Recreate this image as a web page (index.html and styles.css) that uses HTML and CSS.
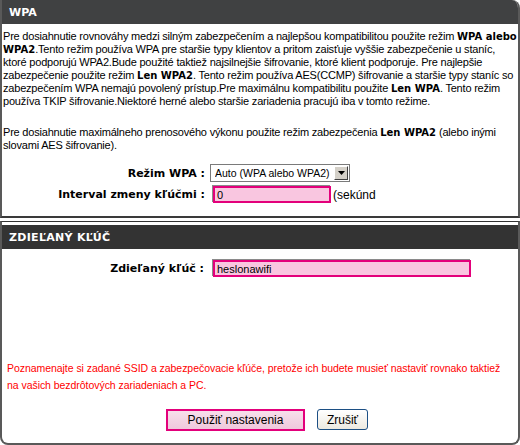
FILE: index.html
```html
<!DOCTYPE html>
<html lang="sk">
<head>
    <meta charset="UTF-8">
    <title>WPA</title>
    <link rel="stylesheet" href="styles.css">
</head>
<body>
    <div class="page">
        <div class="box box-wpa">
            <h2 class="box-title">WPA</h2>
            <div class="box-body">
                <p class="info">Pre dosiahnutie rovnováhy medzi silným zabezpečením a najlepšou kompatibilitou použite režim <b>WPA alebo WPA2</b>.Tento režim používa WPA pre staršie typy klientov a pritom zaisťuje vyššie zabezpečenie u staníc, ktoré podporujú WPA2.Bude použité taktiež najsilnejšie šifrovanie, ktoré klient podporuje. Pre najlepšie zabezpečenie použite režim <b>Len WPA2</b>. Tento režim používa AES(CCMP) šifrovanie a staršie typy staníc so zabezpečením WPA nemajú povolený prístup.Pre maximálnu kompatibilitu použite <b>Len WPA</b>. Tento režim používa TKIP šifrovanie.Niektoré herné alebo staršie zariadenia pracujú iba v tomto režime.</p>
                <p class="info">Pre dosiahnutie maximálneho prenosového výkonu použite režim zabezpečenia <b>Len WPA2</b> (alebo inými slovami AES šifrovanie).</p>

                <div class="form-grid">
                    <label class="field-label">Režim WPA :</label>
                    <div class="select-wrap">
                        <select class="select">
                            <option>Auto (WPA alebo WPA2)</option>
                            <option>Len WPA2</option>
                            <option>Len WPA</option>
                        </select>
                        <span class="select-arrow">
                            <svg width="7" height="4" viewBox="0 0 7 4"><path d="M0 0h7L3.5 4z" fill="#000"/></svg>
                        </span>
                    </div>

                    <label class="field-label">Interval zmeny kľúčmi :</label>
                    <div class="field-row">
                        <input class="pink-input short" type="text" value="0">
                        <span class="unit">(sekúnd</span>
                    </div>
                </div>
            </div>
        </div>

        <div class="box box-key">
            <h2 class="box-title dark">ZDIEĽANÝ KĽÚČ</h2>
            <div class="form-grid key-grid">
                <label class="field-label">Zdieľaný kľúč :</label>
                <input class="pink-input wide" type="text" value="heslonawifi">
            </div>

            <p class="note">Poznamenajte si zadané SSID a zabezpečovacie kľúče, pretože ich budete musieť nastaviť rovnako taktiež na vašich bezdrôtových zariadeniach a PC.</p>

            <div class="buttons">
                <button class="btn btn-apply">Použiť nastavenia</button>
                <button class="btn btn-cancel">Zrušiť</button>
            </div>
        </div>
    </div>
</body>
</html>
```

FILE: styles.css
```css
body {
    margin: 0;
    font-family: "Liberation Sans", Arial, sans-serif;
    font-size: 11px;
    color: #000;
    background-color: #fff;
}

.page {
    width: 520px;
    height: 445px;
    display: flex;
    flex-direction: column;
}

.box {
    border-left: 2px solid #595959;
    border-right: 2px solid #595959;
    background-color: #fff;
}

/* Top panel */
.box-wpa {
    border-bottom: 2px solid #3a3a3a;
    border-top-right-radius: 8px;
    overflow: hidden;
    padding-bottom: 13px;
}

.box-title {
    margin: 0;
    height: 24px;
    line-height: 25px;
    padding-left: 7px;
    font-family: "DejaVu Sans", Verdana, sans-serif;
    font-size: 11px;
    font-weight: bold;
    color: #fff;
    background-color: #404142;
}

.box-title.dark {
    background-color: #333;
    letter-spacing: 0.3px;
}

.box-body {
    padding: 0 1px;
}

.info {
    margin: 6px 0 0;
    line-height: 13px;
    letter-spacing: -0.2px;
}

.info + .info {
    margin-top: 18px;
}

.info b {
    font-family: "DejaVu Sans", Verdana, sans-serif;
    font-size: 10px;
    letter-spacing: 0;
}

/* Label / field rows */
.form-grid {
    display: grid;
    grid-template-columns: 202px auto;
    column-gap: 5px;
    row-gap: 4px;
    align-items: center;
    margin-top: 12px;
}

.field-label {
    text-align: right;
    font-family: "DejaVu Sans", Verdana, sans-serif;
    font-size: 11px;
    font-weight: bold;
}

.select-wrap {
    position: relative;
    width: 140px;
    height: 18px;
}

.select {
    appearance: none;
    -webkit-appearance: none;
    width: 140px;
    height: 18px;
    margin: 0;
    padding: 0 0 0 4px;
    border: 1px solid #7a7a7a;
    border-radius: 0;
    background-color: #fff;
    font-family: "Liberation Sans", Arial, sans-serif;
    font-size: 10.5px;
    color: #000;
}

.select-arrow {
    position: absolute;
    right: 2px;
    top: 2px;
    width: 12px;
    height: 12px;
    display: flex;
    align-items: center;
    justify-content: center;
    background-color: #d4d0c8;
    border: 1px solid;
    border-color: #fff #404040 #404040 #fff;
    pointer-events: none;
}

.field-row {
    display: flex;
    align-items: center;
    gap: 2px;
}

.pink-input {
    box-sizing: border-box;
    height: 17px;
    margin: 0;
    padding: 0 0 0 2px;
    border: 2px solid #e3007b;
    box-shadow: -1px -1px 0 #8a8a8a;
    background-color: #f9c6e0;
    font-family: "Liberation Sans", Arial, sans-serif;
    font-size: 11px;
    color: #000;
    outline: none;
}

.pink-input.short {
    width: 118px;
    margin-left: 3px;
}

.pink-input.wide {
    width: 258px;
    margin-left: 4px;
}

.unit {
    font-size: 12px;
}

/* Bottom panel */
.box-key {
    flex-grow: 1;
    margin-top: 3px;
    border-top: 1px solid #333;
    border-bottom: 2px solid #595959;
    border-bottom-left-radius: 8px;
    border-bottom-right-radius: 8px;
    padding-top: 3px;
    display: flex;
    flex-direction: column;
}

.key-grid {
    margin-top: 11px;
}

.note {
    margin: auto 0 0;
    padding: 0 6px 0 5px;
    font-size: 10.5px;
    letter-spacing: -0.05px;
    line-height: 17px;
    color: #f00;
}

.buttons {
    display: flex;
    justify-content: center;
    gap: 12px;
    padding-left: 14px;
    margin: 15px 0 12px;
}

.btn {
    font-family: "Liberation Sans", Arial, sans-serif;
    font-size: 12px;
    color: #000;
    padding: 0;
    cursor: pointer;
}

.btn-apply {
    width: 139px;
    height: 22px;
    border: 2px solid #e3007b;
    background: linear-gradient(#f7dfeb, #efc8dc);
}

.btn-cancel {
    width: 51px;
    height: 21px;
    border: 1px solid #1c4f84;
    border-radius: 3px;
    background: linear-gradient(#ffffff, #ece9e0);
}
```
